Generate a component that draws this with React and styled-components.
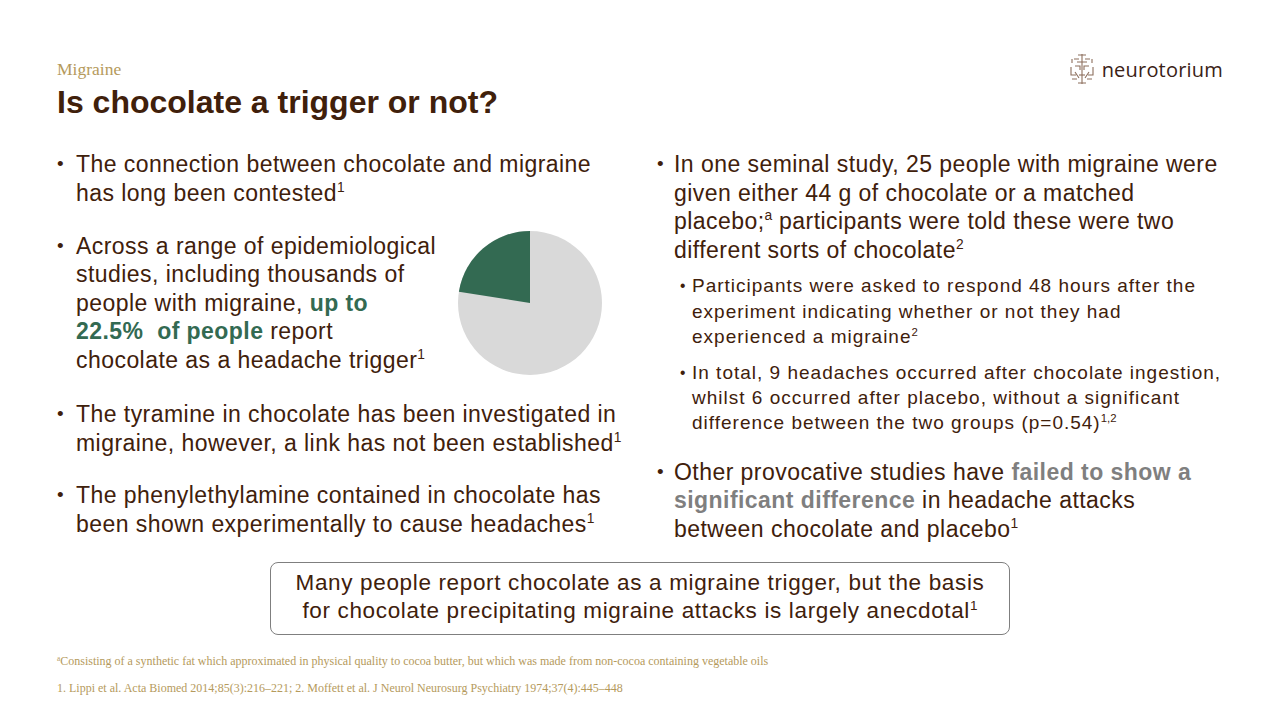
import React from 'react';
import styled, { createGlobalStyle } from 'styled-components';

const GlobalStyle = createGlobalStyle`
  html, body { margin: 0; padding: 0; background: #ffffff; }
`;

const brown = '#40200b';
const gold = '#b59a5c';
const green = '#336a52';

const Page = styled.div`
  width: 1280px;
  height: 720px;
  box-sizing: border-box;
  padding: 53px 57px 0 57px;
  background: #ffffff;
  color: ${brown};
  font-family: "Liberation Sans", Arial, sans-serif;
  overflow: hidden;
`;

const Header = styled.header`
  display: flex;
  justify-content: space-between;
  align-items: flex-start;
`;

const TitleBlock = styled.div`
  padding-top: 6px;
`;

const Section = styled.div`
  font-family: "Liberation Serif", "Times New Roman", serif;
  font-size: 17.5px;
  line-height: 20px;
  color: ${gold};
`;

const Title = styled.h1`
  margin: 5px 0 0 0;
  font-size: 32px;
  line-height: 37px;
  font-weight: bold;
  color: ${brown};
`;

const Logo = styled.div`
  display: flex;
  align-items: center;
  gap: 6px;
`;

const LogoText = styled.span`
  font-family: "Open Sans", "Noto Sans", sans-serif;
  font-size: 20px;
  color: #3a2216;
  letter-spacing: 0.2px;
`;

const Body = styled.div`
  display: grid;
  grid-template-columns: 600px 1fr;
  margin-top: 29px;
`;

const Column = styled.div`
  display: flex;
  flex-direction: column;
`;

const Item = styled.div`
  display: flex;
  font-size: ${p => (p.$sub ? '19px' : '23px')};
  letter-spacing: ${p => (p.$sub ? '1px' : '0.45px')};
  line-height: ${p => (p.$sub ? '25.4px' : '28.6px')};
  margin-top: ${p => p.$gap || 0}px;
  padding-left: ${p => (p.$sub ? '6px' : '0')};
`;

const Dot = styled.span`
  flex: 0 0 ${p => p.$w}px;
  margin-left: ${p => p.$indent || 0}px;
  font-size: 0.82em;
  letter-spacing: 0;
`;

const Text = styled.div`
  flex: ${p => (p.$w ? `0 0 ${p.$w}px` : '1 1 auto')};
  white-space: nowrap;
`;

const Sup = styled.sup`
  font-size: 0.6em;
  line-height: 0;
  letter-spacing: 0;
  vertical-align: 0.62em;
`;

const Green = styled.b`
  color: ${green};
`;

const Grey = styled.b`
  color: #7f7f7f;
`;

const PieRow = styled.div`
  display: flex;
  align-items: center;
  margin-top: 23px;
`;

const Callout = styled.div`
  width: 740px;
  box-sizing: border-box;
  margin: 18px auto 0 auto;
  border: 1.5px solid #7f7f7f;
  border-radius: 8px;
  padding: 6px 0 9px 0;
  text-align: center;
  font-size: 22.5px;
  letter-spacing: 0.65px;
  line-height: 28px;
  color: ${brown};
`;

const Notes = styled.div`
  margin-top: 19px;
  font-family: "Liberation Serif", "Times New Roman", serif;
  font-size: 12px;
  line-height: 14px;
  color: ${gold};
`;

const Note = styled.div`
  margin-top: ${p => p.$gap || 0}px;
`;

function LogoMark() {
  return (
    <svg width="28" height="32" viewBox="0 0 28 32" fill="none" stroke="#8c6e5c" strokeWidth="1.1">
      <path d="M14 1 V31" />
      <path d="M10 2 H18 M10 30 H18" />
      <path d="M6 6 H11 M17 6 H22" />
      <path d="M4 10 V6 M24 10 V6" />
      <path d="M9 9 H19 M7 13 H12 V17 M21 13 H16 V17" />
      <path d="M3 14 V22 H8 M25 14 V22 H20" />
      <path d="M7 19 L11 25 M21 19 L17 25" />
      <path d="M4 26 H9 M19 26 H24" />
      <path d="M11 22 H17" />
    </svg>
  );
}

function Pie() {
  // 22.5% slice, drawn counter-clockwise from 12 o'clock
  const r = 72;
  const a = (22.5 / 100) * 2 * Math.PI;
  const x = r - r * Math.sin(a);
  const y = r - r * Math.cos(a);
  return (
    <svg width="146" height="146" viewBox="-1 -1 146 146">
      <circle cx={r} cy={r} r={r} fill="#d9d9d9" />
      <path d={`M${r} ${r} L${r} 0 A${r} ${r} 0 0 0 ${x} ${y} Z`} fill={green} />
    </svg>
  );
}

export default function App() {
  return (
    <Page>
      <GlobalStyle />
      <Header>
        <TitleBlock>
          <Section>Migraine</Section>
          <Title>Is chocolate a trigger or not?</Title>
        </TitleBlock>
        <Logo>
          <LogoMark />
          <LogoText>neurotorium</LogoText>
        </Logo>
      </Header>

      <Body>
        <Column>
          <Item>
            <Dot $w={19}>•</Dot>
            <Text>
              The connection between chocolate and migraine<br />
              has long been contested<Sup>1</Sup>
            </Text>
          </Item>
          <PieRow>
            <Item>
              <Dot $w={19}>•</Dot>
              <Text $w={381}>
                Across a range of epidemiological<br />
                studies, including thousands of<br />
                people with migraine, <Green>up to</Green><br />
                <Green>22.5%&nbsp; of people</Green> report<br />
                chocolate as a headache trigger<Sup>1</Sup>
              </Text>
            </Item>
            <Pie />
          </PieRow>
          <Item $gap={24}>
            <Dot $w={19}>•</Dot>
            <Text>
              The tyramine in chocolate has been investigated in<br />
              migraine, however, a link has not been established<Sup>1</Sup>
            </Text>
          </Item>
          <Item $gap={24}>
            <Dot $w={19}>•</Dot>
            <Text>
              The phenylethylamine contained in chocolate has<br />
              been shown experimentally to cause headaches<Sup>1</Sup>
            </Text>
          </Item>
        </Column>

        <Column>
          <Item>
            <Dot $w={17}>•</Dot>
            <Text>
              In one seminal study, 25 people with migraine were<br />
              given either 44 g of chocolate or a matched<br />
              placebo;<Sup>a</Sup> participants were told these were two<br />
              different sorts of chocolate<Sup>2</Sup>
            </Text>
          </Item>
          <Item $sub $gap={9}>
            <Dot $w={12} $indent={17}>•</Dot>
            <Text>
              Participants were asked to respond 48 hours after the<br />
              experiment indicating whether or not they had<br />
              experienced a migraine<Sup>2</Sup>
            </Text>
          </Item>
          <Item $sub $gap={10}>
            <Dot $w={12} $indent={17}>•</Dot>
            <Text>
              In total, 9 headaches occurred after chocolate ingestion,<br />
              whilst 6 occurred after placebo, without a significant<br />
              difference between the two groups (p=0.54)<Sup>1,2</Sup>
            </Text>
          </Item>
          <Item $gap={22}>
            <Dot $w={17}>•</Dot>
            <Text>
              Other provocative studies have <Grey>failed to show a</Grey><br />
              <Grey>significant difference</Grey> in headache attacks<br />
              between chocolate and placebo<Sup>1</Sup>
            </Text>
          </Item>
        </Column>
      </Body>

      <Callout>
        Many people report chocolate as a migraine trigger, but the basis<br />
        for chocolate precipitating migraine attacks is largely anecdotal<Sup>1</Sup>
      </Callout>

      <Notes>
        <Note>
          <Sup>a</Sup>Consisting of a synthetic fat which approximated in physical quality to cocoa butter, but which was made from non-cocoa containing vegetable oils
        </Note>
        <Note $gap={13}>
          1. Lippi et al. Acta Biomed 2014;85(3):216–221; 2. Moffett et al. J Neurol Neurosurg Psychiatry 1974;37(4):445–448
        </Note>
      </Notes>
    </Page>
  );
}
